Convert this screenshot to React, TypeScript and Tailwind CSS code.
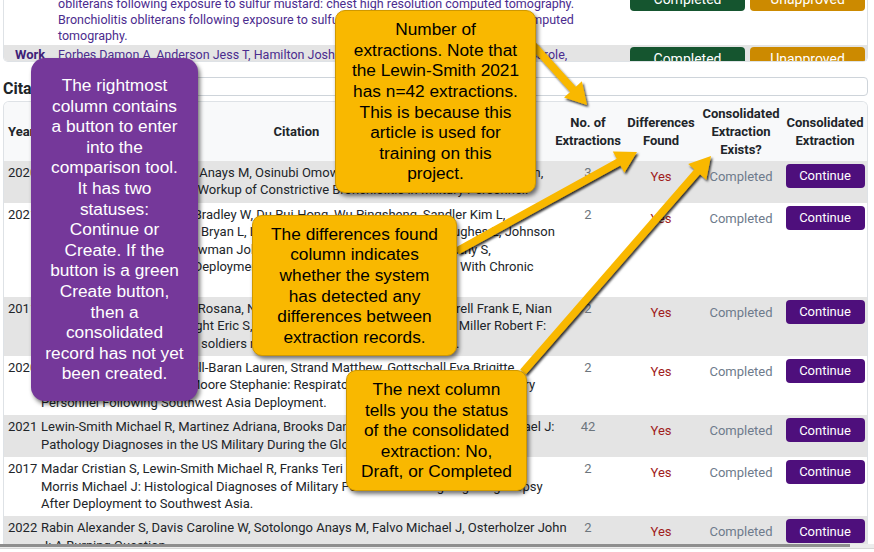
import type { ReactNode } from "react";

type Citation = {
  year: string;
  count: number;
  lines: string[];
};

const citations: Citation[] = [
  {
    year: "2020",
    count: 3,
    lines: [
      "Falvo Michael J, Sotolongo Anays M, Osinubi Omowunmi Y, Helmer Drew A, Lu Shou-En,",
      "Rabin Alexander S: Clinical Workup of Constrictive Bronchiolitis in Military Personnel.",
    ],
  },
  {
    year: "2021",
    count: 2,
    lines: [
      "Gutor Sergey S, Richmond Bradley W, Du Rui-Hong, Wu Pingsheng, Sandler Kim L,",
      "MacKinnon Grant, Han Wei, Bryan L, Lee Jae Woo, Bastarache Julie A, Hughes E, Johnson",
      "Joyce E, Harrell Frank E, Newman John H, Miller Robert F, Blackwell Timothy S,",
      "Polosukhin Vasiliy V: Post-Deployment Respiratory Syndrome in Soldiers With Chronic",
      "Exertional Dyspnea.",
    ],
  },
  {
    year: "2011",
    count: 2,
    lines: [
      "King Matthew S, Eisenberg Rosana, Newman John H, Tolle James J, Harrell Frank E, Nian",
      "Hui, Ninan Mathew, Lambright Eric S, Sheller James R, Johnson Joyce E, Miller Robert F:",
      "Constrictive bronchiolitis in soldiers returning from Iraq and Afghanistan.",
    ],
  },
  {
    year: "2020",
    count: 2,
    lines: [
      "Krefft Silpa D, Wolff Jon, Zell-Baran Lauren, Strand Matthew, Gottschall Eva Brigitte,",
      "Rose Cecile S, Meehan R, Moore Stephanie: Respiratory Diseases in Post-9/11 Military",
      "Personnel Following Southwest Asia Deployment.",
    ],
  },
  {
    year: "2021",
    count: 42,
    lines: [
      "Lewin-Smith Michael R, Martinez Adriana, Brooks Daniel I, Franks Teri J, Morris Michael J:",
      "Pathology Diagnoses in the US Military During the Global War on Terrorism.",
    ],
  },
  {
    year: "2017",
    count: 2,
    lines: [
      "Madar Cristian S, Lewin-Smith Michael R, Franks Teri J, Travis William D, Mullick F G,",
      "Morris Michael J: Histological Diagnoses of Military Personnel Undergoing Lung Biopsy",
      "After Deployment to Southwest Asia.",
    ],
  },
  {
    year: "2022",
    count: 2,
    lines: [
      "Rabin Alexander S, Davis Caroline W, Sotolongo Anays M, Falvo Michael J, Osterholzer John",
      "J: A Burning Question.",
    ],
  },
];

type Pt = [number, number];

function Arrow({ from, to }: { from: Pt; to: Pt }) {
  const dx = to[0] - from[0];
  const dy = to[1] - from[1];
  const len = Math.hypot(dx, dy);
  const ux = dx / len;
  const uy = dy / len;
  const head = 21;
  const hw = 12;
  const bx = to[0] - ux * head;
  const by = to[1] - uy * head;
  const pts = [
    `${to[0]},${to[1]}`,
    `${bx - uy * hw},${by + ux * hw}`,
    `${bx + uy * hw},${by - ux * hw}`,
  ].join(" ");
  return (
    <g filter="url(#arrow-shadow)">
      <line
        x1={from[0]}
        y1={from[1]}
        x2={bx + ux * 2}
        y2={by + uy * 2}
        stroke="#f9b800"
        strokeWidth={7.5}
      />
      <polygon points={pts} fill="#f9b800" />
    </g>
  );
}

function Callout({
  className,
  children,
}: {
  className: string;
  children: ReactNode;
}) {
  return (
    <div
      className={`absolute flex flex-col items-center justify-center text-center font-['Liberation_Sans',Arial,sans-serif] text-[17.3px] leading-[20.6px] shadow-[2px_3px_4px_rgba(0,0,0,0.55)] ${className}`}
    >
      {children}
    </div>
  );
}

function Lines({ items }: { items: string[] }) {
  return (
    <>
      {items.map((line) => (
        <span key={line} className="block whitespace-nowrap">
          {line}
        </span>
      ))}
    </>
  );
}

export default function App() {
  return (
    <div className="relative h-[552px] w-[874px] overflow-hidden bg-white font-['Roboto',sans-serif] text-[#212529]">
      <div className="pl-[3px] pr-[6px]">
        {/* work list card, scrolled to its bottom */}
        <div className="h-[62px] overflow-hidden rounded-b-[5px] border-x border-b border-[#dee2e6]">
          <div className="-mt-[20px]">
            <div className="flex bg-white pb-px">
              <div className="w-[54px] shrink-0" />
              <div className="flex-1 text-[12.5px] leading-4 text-[#4b2c8e]">
                <Lines
                  items={[
                    "Ghanei Mostafa, Mokhtari Majid, Mohammad Mehdi Moin, Aslani Jafar: Bronchiolitis",
                    "obliterans following exposure to sulfur mustard: chest high resolution computed tomography.",
                    "Bronchiolitis obliterans following exposure to sulfur mustard: chest high resolution computed",
                    "tomography.",
                  ]}
                />
              </div>
              <div className="flex shrink-0 items-start gap-[5px] pr-[2px] pt-[7px]">
                <button className="h-[24px] w-[115px] rounded-[4px] bg-[#15552f] text-[14px] text-white">
                  Completed
                </button>
                <button className="h-[24px] w-[115px] rounded-[4px] bg-[#cc8a00] text-[14px] text-white">
                  Unapproved
                </button>
              </div>
            </div>
            <div className="flex bg-[#e4e4e4] py-[2px]">
              <div className="w-[54px] shrink-0 pl-[11px] text-[13px] font-bold leading-4 text-[#3f1f78]">
                Work
              </div>
              <div className="flex-1 text-[12.5px] leading-4 text-[#4b2c8e]">
                <Lines
                  items={[
                    "Forbes Damon A, Anderson Jess T, Hamilton Joshua L, Phillips Lance, Knox J, Garcia Carole,",
                    "Nguyen Thomas: Occupational exposures during military deployment.",
                  ]}
                />
              </div>
              <div className="flex shrink-0 items-start gap-[5px] pr-[2px]">
                <button className="h-[24px] w-[115px] rounded-[4px] bg-[#15552f] text-[14px] text-white">
                  Completed
                </button>
                <button className="h-[24px] w-[115px] rounded-[4px] bg-[#cc8a00] text-[14px] text-white">
                  Unapproved
                </button>
              </div>
            </div>
          </div>
        </div>

        <div className="mt-[15px] flex h-[19px] items-start gap-[12px]">
          <h5 className="mt-[2px] text-[16px] font-bold leading-[19px] text-[#212529]">
            Citations
          </h5>
          <input
            readOnly
            className="h-[19px] flex-1 rounded-[4px] border border-[#ced4da] bg-white"
          />
        </div>

        <div className="mt-[5px] h-[443px] overflow-hidden rounded-t-[6px] border border-b-0 border-[#dee2e6]">
          <table className="w-full table-fixed border-collapse text-[13px]">
            <colgroup>
              <col className="w-[36px]" />
              <col />
              <col className="w-[70px]" />
              <col className="w-[76px]" />
              <col className="w-[84px]" />
              <col className="w-[84px]" />
            </colgroup>
            <thead>
              <tr className="h-[59px] bg-[#f8f9fa] font-bold leading-[18px]">
                <th className="pl-[4px] text-left align-middle">Year</th>
                <th className="text-center align-middle">Citation</th>
                <th className="text-center align-middle">
                  No. of
                  <br />
                  Extractions
                </th>
                <th className="text-center align-middle">
                  Differences
                  <br />
                  Found
                </th>
                <th className="text-center align-middle">
                  Consolidated
                  <br />
                  Extraction
                  <br />
                  Exists?
                </th>
                <th className="text-center align-middle">
                  Consolidated
                  <br />
                  Extraction
                </th>
              </tr>
            </thead>
            <tbody>
              {citations.map((c, i) => (
                <tr
                  key={i}
                  className={i % 2 === 0 ? "bg-[#e4e4e4]" : "bg-white"}
                >
                  <td className="pl-[4px] pt-[3px] align-top leading-[17.4px]">
                    {c.year}
                  </td>
                  <td className="pb-[4px] pl-[1px] pt-[3px] align-top leading-[17.4px]">
                    <Lines items={c.lines} />
                  </td>
                  <td className="pt-[3px] text-center align-top leading-[17.4px] text-[#6c757d]">
                    {c.count}
                  </td>
                  <td className="pt-[7px] text-center align-top leading-[17.4px] text-[#a01c1c]">
                    Yes
                  </td>
                  <td className="pt-[7px] text-center align-top leading-[17.4px] text-[#6e7b8c]">
                    Completed
                  </td>
                  <td className="pt-[3px] text-center align-top">
                    <button className="h-[24px] w-[79px] rounded-[4px] bg-[#4e0f7c] text-[13px] text-white">
                      Continue
                    </button>
                  </td>
                </tr>
              ))}
            </tbody>
          </table>
        </div>
      </div>

      <div className="h-[4px] bg-[#ececec]">
        <div className="h-[3px] w-[850px] bg-[#8e8e8e]" />
      </div>
      <div className="h-[4px] border-t border-[#d6d6d6] bg-white" />

      {/* annotation overlay */}
      <svg
        className="pointer-events-none absolute left-0 top-0"
        width={874}
        height={552}
      >
        <defs>
          <filter id="arrow-shadow" x="-20%" y="-20%" width="140%" height="140%">
            <feDropShadow
              dx="1.5"
              dy="2"
              stdDeviation="1.2"
              floodColor="#000"
              floodOpacity="0.8"
            />
          </filter>
        </defs>
        <Arrow from={[533, 45]} to={[587, 105]} />
        <Arrow from={[457, 251]} to={[637, 152]} />
        <Arrow from={[523, 372]} to={[711, 156]} />
      </svg>

      <Callout className="left-[31px] top-[58px] h-[343px] w-[167px] rounded-[14px] bg-[#75389a] text-white">
        <Lines
          items={[
            "The rightmost",
            "column contains",
            "a button to enter",
            "into the",
            "comparison tool.",
            "It has two",
            "statuses:",
            "Continue or",
            "Create. If the",
            "button is a green",
            "Create button,",
            "then a",
            "consolidated",
            "record has not yet",
            "been created.",
          ]}
        />
      </Callout>

      <Callout className="left-[335px] top-[10px] h-[183px] w-[201px] rounded-[10px] border border-[#cf9800] bg-[#f9b800] text-black">
        <Lines
          items={[
            "Number of",
            "extractions. Note that",
            "the Lewin-Smith 2021",
            "has n=42 extractions.",
            "This is because this",
            "article is used for",
            "training on this",
            "project.",
          ]}
        />
      </Callout>

      <Callout className="left-[252px] top-[215px] h-[141px] w-[205px] rounded-[10px] border border-[#cf9800] bg-[#f9b800] text-black">
        <Lines
          items={[
            "The differences found",
            "column indicates",
            "whether the system",
            "has detected any",
            "differences between",
            "extraction records.",
          ]}
        />
      </Callout>

      <Callout className="left-[346px] top-[370px] h-[121px] w-[181px] rounded-[10px] border border-[#cf9800] bg-[#f9b800] text-black">
        <Lines
          items={[
            "The next column",
            "tells you the status",
            "of the consolidated",
            "extraction: No,",
            "Draft, or Completed",
          ]}
        />
      </Callout>
    </div>
  );
}
